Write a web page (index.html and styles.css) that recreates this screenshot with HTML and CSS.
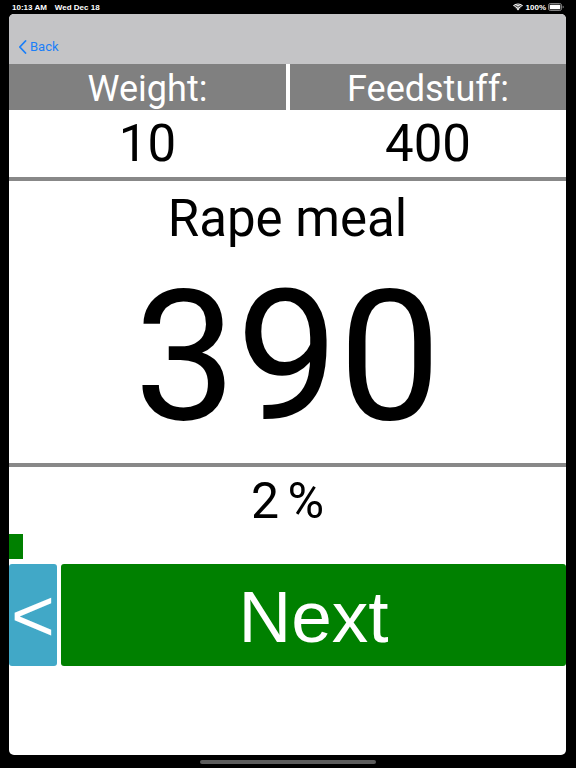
FILE: index.html
```html
<!DOCTYPE html>
<html lang="en">
<head>
<meta charset="utf-8">
<title>Feed</title>
<link rel="stylesheet" href="styles.css">
</head>
<body>
<div class="status">
  <div class="status-left"><span>10:13 AM</span><span>Wed Dec 18</span></div>
  <div class="status-right">
    <svg class="wifi" width="10" height="8" viewBox="0 0 20 15"><path d="M10 14.5 L6.8 11.2 A4.6 4.6 0 0 1 13.2 11.2 Z" fill="#fff"/><path d="M4.6 9 A7.8 7.8 0 0 1 15.4 9 L14 10.4 A5.8 5.8 0 0 0 6 10.4 Z" fill="#fff"/><path d="M2.3 6.7 A11 11 0 0 1 17.7 6.7 L16.3 8.1 A9 9 0 0 0 3.7 8.1 Z" fill="#fff"/><path d="M0 4.4 A14.2 14.2 0 0 1 20 4.4 L18.6 5.8 A12.2 12.2 0 0 0 1.4 5.8 Z" fill="#fff"/></svg>
    <span>100%</span>
    <svg class="battery" width="16" height="8" viewBox="0 0 16 8"><rect x="0.5" y="0.5" width="13" height="7" rx="1.8" fill="none" stroke="#fff" stroke-opacity="0.5"/><rect x="1.7" y="1.7" width="10.6" height="4.6" rx="0.9" fill="#fff"/><path d="M14.6 2.8 a1.2 1.2 0 0 1 0 2.4z" fill="#fff" fill-opacity="0.5"/></svg>
  </div>
</div>
<div class="card">
  <div class="nav">
    <a class="back" href="#"><svg width="9" height="14" viewBox="0 0 9 14"><path d="M7.5 1 L1.8 7 L7.5 13" fill="none" stroke="#1b7ff8" stroke-width="1.8" stroke-linecap="round" stroke-linejoin="round"/></svg><span>Back</span></a>
  </div>
  <div class="labels">
    <div class="label">Weight:</div>
    <div class="label">Feedstuff:</div>
  </div>
  <div class="values">
    <div class="value">10</div>
    <div class="value">400</div>
  </div>
  <div class="main">
    <div class="feed-name">Rape meal</div>
    <div class="amount">390</div>
  </div>
  <div class="percent">2 %</div>
  <div class="progress"><div class="progress-fill" style="width:14px"></div></div>
  <div class="buttons">
    <button class="btn btn-prev">&lt;</button>
    <button class="btn btn-next">Next</button>
  </div>
</div>
<div class="home-bar"></div>
</body>
</html>
```
FILE: styles.css
```css
* { box-sizing: border-box; }
html, body { margin: 0; padding: 0; }
body {
  background: #000;
  width: 576px;
  height: 768px;
  overflow: hidden;
  font-family: Roboto, "Liberation Sans", sans-serif;
}
.status {
  height: 14px;
  display: flex;
  justify-content: space-between;
  align-items: center;
  padding: 0 12px 0 12px;
  color: #fff;
  font-family: "Liberation Sans", Arial, sans-serif;
  font-size: 8px;
  font-weight: bold;
}
.status-left span { margin-right: 8px; }
.status-right { display: flex; align-items: center; gap: 2px; }
.status-right .wifi { margin-right: 1px; }
.card {
  margin-left: 9px;
  width: 557px;
  height: 741px;
  background: #fff;
  border-radius: 5px;
  overflow: hidden;
}
.nav {
  height: 50px;
  background: #c4c4c6;
  display: flex;
  align-items: flex-end;
  padding: 0 0 10px 9px;
}
.back {
  display: flex;
  align-items: center;
  gap: 3px;
  color: #1b7ff8;
  text-decoration: none;
  font-size: 13px;
  font-family: Roboto, sans-serif;
}
.labels {
  height: 44px;
  display: grid;
  grid-template-columns: 277px 1fr;
  column-gap: 4px;
  background: #fff;
}
.label {
  background: #808080;
  color: #fff;
  font-size: 36px;
  display: flex;
  align-items: center;
  justify-content: center;
  padding-top: 4px;
}
.values {
  height: 69px;
  display: grid;
  grid-template-columns: 277px 1fr;
  column-gap: 4px;
  border-bottom: 4px solid #888;
  box-sizing: content-box;
}
.value {
  font-size: 51px;
  color: #000;
  display: flex;
  align-items: center;
  justify-content: center;
  padding-top: 1px;
}
.main {
  height: 282px;
  border-bottom: 4px solid #888;
  box-sizing: content-box;
  display: flex;
  flex-direction: column;
  align-items: center;
}
.feed-name {
  font-size: 51px;
  line-height: 60px;
  margin-top: 8px;
  color: #000;
}
.amount {
  font-size: 182px;
  line-height: 180px;
  margin-top: 18px;
  color: #000;
}
.percent {
  height: 67px;
  display: flex;
  align-items: center;
  justify-content: center;
  font-size: 50px;
  word-spacing: -4px;
  color: #000;
}
.progress {
  height: 25px;
}
.progress-fill {
  height: 100%;
  background: #008000;
}
.buttons {
  margin-top: 5px;
  height: 102px;
  display: flex;
  gap: 4px;
}
.btn {
  border: none;
  border-radius: 3px;
  color: #fff;
  font-family: "Liberation Sans", Arial, sans-serif;
  font-size: 75px;
  padding: 0;
  margin: 0;
  height: 100%;
  display: flex;
  align-items: center;
  justify-content: center;
}
.btn-prev {
  width: 48px;
  background: #41a8c7;
}
.btn-next {
  flex: 1;
  background: #008000;
  font-size: 73px;
  padding-top: 2px;
}
.home-bar {
  width: 176px;
  height: 4px;
  border-radius: 2px;
  background: #5c5c5c;
  margin: 5px auto 0;
}
```
